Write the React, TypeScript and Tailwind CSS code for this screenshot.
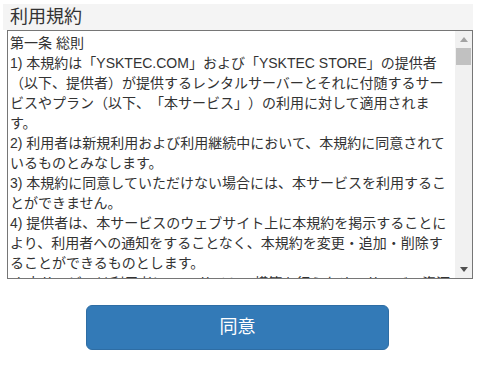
import React from "react";

const terms = [
  "第一条 総則",
  "1) 本規約は「YSKTEC.COM」および「YSKTEC STORE」の提供者（以下、提供者）が提供するレンタルサーバーとそれに付随するサービスやプラン（以下、「本サービス」）の利用に対して適用されます。",
  "2) 利用者は新規利用および利用継続中において、本規約に同意されているものとみなします。",
  "3) 本規約に同意していただけない場合には、本サービスを利用することができません。",
  "4) 提供者は、本サービスのウェブサイト上に本規約を掲示することにより、利用者への通知をすることなく、本規約を変更・追加・削除することができるものとします。",
  "5) 本サービスは利用者にWEBサイトの構築を行うためのサーバー資源を提供するものです。",
  "6) 利用者は、本規約の変更後に本サービスを利用した場合、変更後の規約に同意したものとみなします。",
];

const App = () => {
  return (
    <div
      className="w-[480px] h-[378px] bg-white"
      style={{ fontFamily: '"Liberation Sans", "Noto Sans CJK JP", sans-serif' }}
    >
      <div className="pt-[4px] pl-[3px] pr-[7px]">
        {/* TITLE */}
        <div className="bg-[#f4f4f4] h-[26px] pl-[7px] text-[18px] leading-[26px] text-[#333]">
          利用規約
        </div>

        {/* TERMS BOX */}
        <div className="ml-[4px] h-[249px] border border-[#767676] flex">
          <div className="flex-1 overflow-hidden text-[14px] leading-[20px] text-[#333] pl-[2px] pr-[2px] pt-[2px] [text-spacing-trim:space-all]">
            {terms.map((t, i) => (
              <div key={i}>{t}</div>
            ))}
          </div>

          {/* scrollbar */}
          <div className="w-[17px] bg-[#f1f1f1] flex flex-col items-center">
            <div className="h-[17px] w-full flex items-center justify-center">
              <svg width="8" height="5" viewBox="0 0 8 5">
                <path d="M0 5 L4 0 L8 5 Z" fill="#a3a3a3" />
              </svg>
            </div>
            <div className="w-[15px] h-[17px] bg-[#c1c1c1]" />
            <div className="flex-1" />
            <div className="h-[17px] w-full flex items-center justify-center">
              <svg width="8" height="5" viewBox="0 0 8 5">
                <path d="M0 0 L8 0 L4 5 Z" fill="#505050" />
              </svg>
            </div>
          </div>
        </div>
      </div>

      {/* AGREE BUTTON */}
      <div className="flex justify-center pt-[26px]">
        <button className="w-[303px] h-[45px] ml-[-5px] bg-[#337ab7] border border-[#2e6da4] rounded-[6px] text-white text-[18px]">
          同意
        </button>
      </div>
    </div>
  );
};

export default App;
